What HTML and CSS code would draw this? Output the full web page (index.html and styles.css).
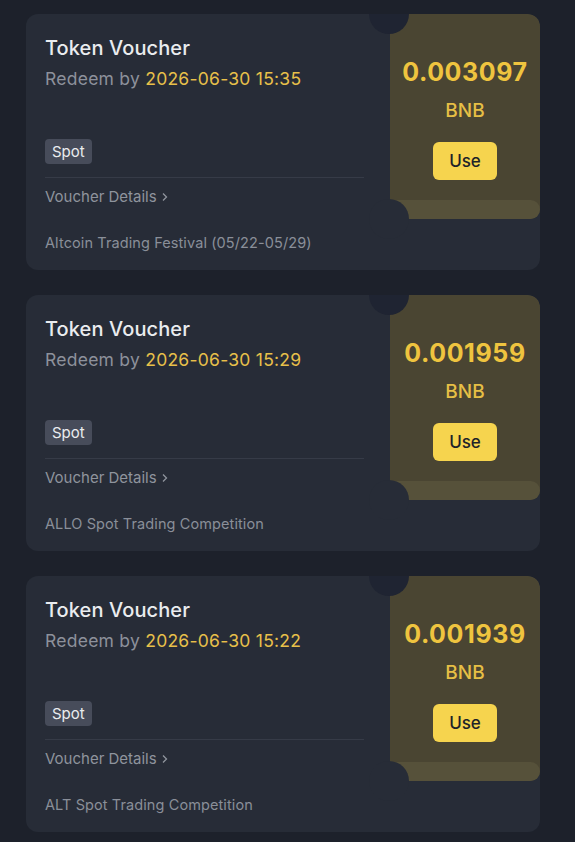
FILE: index.html
```html
<!DOCTYPE html>
<html lang="en">
<head>
  <meta charset="UTF-8" />
  <meta name="viewport" content="width=device-width, initial-scale=1.0"/>
  <title>Vouchers</title>
  <link rel="stylesheet" href="styles.css">
</head>
<body>
  <div class="voucher-list">

    <div class="voucher">
      <div class="voucher-main">
        <div class="title">Token Voucher</div>
        <div class="redeem">Redeem by <span class="date">2026-06-30 15:35</span></div>
        <span class="tag">Spot</span>
        <div class="divider"></div>
        <div class="details">Voucher Details
          <svg class="chev" width="8" height="10" viewBox="0 0 8 10"><path d="M2 1.5 L5.5 5 L2 8.5" fill="none" stroke="currentColor" stroke-width="1.3"/></svg>
        </div>
        <div class="campaign">Altcoin Trading Festival (05/22-05/29)</div>
      </div>
      <div class="voucher-side">
        <div class="amount-panel">
          <div class="amount">0.003097</div>
          <div class="coin">BNB</div>
          <button class="use-btn">Use</button>
        </div>
      </div>
      <span class="notch notch-top"></span>
      <span class="notch notch-bottom"></span>
    </div>

    <div class="voucher">
      <div class="voucher-main">
        <div class="title">Token Voucher</div>
        <div class="redeem">Redeem by <span class="date">2026-06-30 15:29</span></div>
        <span class="tag">Spot</span>
        <div class="divider"></div>
        <div class="details">Voucher Details
          <svg class="chev" width="8" height="10" viewBox="0 0 8 10"><path d="M2 1.5 L5.5 5 L2 8.5" fill="none" stroke="currentColor" stroke-width="1.3"/></svg>
        </div>
        <div class="campaign">ALLO Spot Trading Competition</div>
      </div>
      <div class="voucher-side">
        <div class="amount-panel">
          <div class="amount">0.001959</div>
          <div class="coin">BNB</div>
          <button class="use-btn">Use</button>
        </div>
      </div>
      <span class="notch notch-top"></span>
      <span class="notch notch-bottom"></span>
    </div>

    <div class="voucher">
      <div class="voucher-main">
        <div class="title">Token Voucher</div>
        <div class="redeem">Redeem by <span class="date">2026-06-30 15:22</span></div>
        <span class="tag">Spot</span>
        <div class="divider"></div>
        <div class="details">Voucher Details
          <svg class="chev" width="8" height="10" viewBox="0 0 8 10"><path d="M2 1.5 L5.5 5 L2 8.5" fill="none" stroke="currentColor" stroke-width="1.3"/></svg>
        </div>
        <div class="campaign">ALT Spot Trading Competition</div>
      </div>
      <div class="voucher-side">
        <div class="amount-panel">
          <div class="amount">0.001939</div>
          <div class="coin">BNB</div>
          <button class="use-btn">Use</button>
        </div>
      </div>
      <span class="notch notch-top"></span>
      <span class="notch notch-bottom"></span>
    </div>

  </div>
</body>
</html>
```

FILE: styles.css
```css
body {
  margin: 0;
  background: #1d212b;
  font-family: Inter, "Noto Sans", sans-serif;
  color: #eaecef;
}
.voucher-list {
  display: flex;
  flex-direction: column;
  gap: 25px;
  padding: 14px 35px 20px 26px;
}
.voucher {
  position: relative;
  display: flex;
  height: 256px;
  background: #272c37;
  border-radius: 12px;
  overflow: hidden;
}
.voucher-main {
  flex: 1;
  display: flex;
  flex-direction: column;
  align-items: flex-start;
  padding: 22px 0 0 19px;
}
.title {
  font-size: 20px;
  line-height: 24px;
  font-weight: 500;
  letter-spacing: 0.1px;
  color: #eaecef;
}
.redeem {
  margin-top: 8px;
  font-size: 17.5px;
  line-height: 22px;
  letter-spacing: 0.25px;
  color: #8d919b;
}
.date {
  color: #e8c04a;
}
.tag {
  margin-top: 49px;
  height: 25px;
  line-height: 25px;
  padding: 0 7px;
  border-radius: 4px;
  background: #474c5a;
  color: #eaecef;
  font-size: 15px;
}
.divider {
  align-self: stretch;
  margin: 13px 26px 0 0;
  border-top: 1px solid #363b47;
}
.details {
  margin-top: 9px;
  display: flex;
  align-items: center;
  gap: 4px;
  font-size: 15px;
  line-height: 20px;
  color: #8f949d;
}
.chev {
  display: block;
}
.campaign {
  margin-top: 26px;
  font-size: 14.5px;
  line-height: 20px;
  letter-spacing: 0.1px;
  color: #8a8f99;
}
.voucher-side {
  width: 150px;
}
.amount-panel {
  position: relative;
  height: 205px;
  background: #4a4532;
  border-radius: 0 12px 10px 0;
  display: flex;
  flex-direction: column;
  align-items: center;
  padding-top: 43px;
  box-sizing: border-box;
}
.amount-panel::after {
  content: "";
  position: absolute;
  left: 0;
  right: 0;
  bottom: 0;
  height: 19px;
  background: #56513a;
  border-radius: 0 10px 10px 0;
}
.amount {
  font-size: 25px;
  line-height: 30px;
  font-weight: 700;
  letter-spacing: 0.6px;
  color: #efc43f;
}
.coin {
  margin-top: 12px;
  font-size: 19px;
  line-height: 24px;
  font-weight: 500;
  color: #e6bf45;
}
.use-btn {
  margin-top: 19px;
  width: 64px;
  height: 38px;
  border: none;
  border-radius: 6px;
  background: #f6d44e;
  color: #1e2329;
  font-family: inherit;
  font-size: 17px;
  font-weight: 500;
}
.notch {
  position: absolute;
  left: 343px;
  width: 40px;
  height: 40px;
  border-radius: 50%;
}
.notch-top {
  top: -20px;
  background: #1f2432;
}
.notch-bottom {
  top: 185px;
  background: #272c37;
}
```
